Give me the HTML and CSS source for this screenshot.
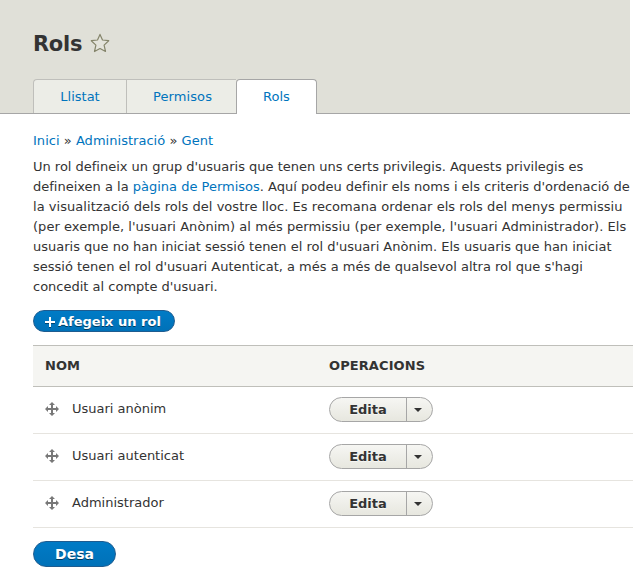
FILE: index.html
```html
<!DOCTYPE html>
<html lang="ca">
<head>
<meta charset="utf-8">
<title>Rols</title>
<link rel="stylesheet" href="styles.css">
</head>
<body>
<svg class="sprite" aria-hidden="true">
  <symbol id="move" viewBox="0 0 14 14"><path fill="#787878" d="M7 0l3 3H8v3h3V4l3 3-3 3V8H8v3h2l-3 3-3-3h2V8H3v2L0 7l3-3v2h3V3H4z"/></symbol>
</svg>
<header class="header">
  <div class="title-row">
    <h1 class="title">Rols</h1>
    <svg class="star" viewBox="0 0 20 20"><path d="M10 1.400l2.500 5.600 6.200.700-4.600 4.400 1.400 6.400L10 15.500l-5.500 3 1.400-6.400L1.300 7.700l6.200-.700z"/></svg>
  </div>
  <nav class="tabs">
    <a class="tab tab-first" href="#">Llistat</a>
    <a class="tab tab-second" href="#">Permisos</a>
    <a class="tab tab-active" href="#">Rols</a>
  </nav>
</header>
<main class="content">
  <nav class="breadcrumb"><a href="#">Inici</a> » <a href="#">Administració</a> » <a href="#">Gent</a></nav>
  <p class="help"><span class="tight">Un rol defineix un grup d'usuaris que tenen uns certs privilegis. Aquests privilegis es</span><br>
  defineixen a la <a href="#">pàgina de Permisos</a>. Aquí podeu definir els noms i els criteris d'ordenació de<br>
  <span class="loose">la visualització dels rols del vostre lloc. Es recomana ordenar els rols del menys permissiu</span><br>
  <span class="loose">(per exemple, l'usuari Anònim) al més permissiu (per exemple, l'usuari Administrador). Els</span><br>
  usuaris que no han iniciat sessió tenen el rol d'usuari Anònim. Els usuaris que han iniciat<br>
  sessió tenen el rol d'usuari Autenticat, a més a més de qualsevol altra rol que s'hagi<br>
  concedit al compte d'usuari.</p>
  <a class="primary add" href="#"><svg class="plus" viewBox="0 0 10 10"><path d="M4 0h2v4h4v2H6v4H4V6H0V4h4z"/></svg>Afegeix un rol</a>
  <div class="table">
    <div class="row head"><span>NOM</span><span class="operations">OPERACIONS</span></div>
    <div class="row">
      <div class="name"><svg class="move"><use href="#move"/></svg>Usuari anònim</div>
      <div class="drop"><a class="edit" href="#">Edita</a><button class="toggle" aria-label="Més"><i class="caret"></i></button></div>
    </div>
    <div class="row">
      <div class="name"><svg class="move"><use href="#move"/></svg>Usuari autenticat</div>
      <div class="drop"><a class="edit" href="#">Edita</a><button class="toggle" aria-label="Més"><i class="caret"></i></button></div>
    </div>
    <div class="row">
      <div class="name"><svg class="move"><use href="#move"/></svg>Administrador</div>
      <div class="drop"><a class="edit" href="#">Edita</a><button class="toggle" aria-label="Més"><i class="caret"></i></button></div>
    </div>
  </div>
  <button class="primary save">Desa</button>
</main>
</body>
</html>
```
FILE: styles.css
```css
* { box-sizing: border-box; }
body {
  margin: 0;
  height: 567px;
  overflow: hidden;
  background: #fff;
  color: #333;
  font: 13px/20px "DejaVu Sans", sans-serif;
}
a { color: #0074bd; text-decoration: none; }
.sprite { display: none; }
.header {
  display: flex;
  flex-direction: column;
  justify-content: space-between;
  width: 630px;
  height: 114px;
  padding: 30px 0 0 33px;
  background: #e0e0d8;
  box-shadow: inset 0 -1px #a6a6a6;
}
.title-row { display: flex; align-items: center; height: 28px; }
.title { margin: 0; font-size: 21px; line-height: 28px; letter-spacing: -0.3px; }
.star { width: 20px; height: 20px; margin: -2px 0 0 8px; fill: #e4e4dc; stroke: #85856b; stroke-width: 1.2; stroke-linejoin: round; }
.tabs { display: flex; height: 35px; }
.tab {
  height: 34px;
  border: 1px solid #bfbfbb;
  border-bottom: 0;
  background: #ecede7;
  line-height: 34px;
  text-align: center;
}
.tab-first { width: 93px; border-right: 0; border-top-left-radius: 4px; }
.tab-second { width: 110px; border-right: 0; padding-left: 2px; letter-spacing: 0.1px; }
.tab-active { width: 81px; height: 35px; border-color: #a6a6a6; border-radius: 4px 4px 0 0; background: #fff; }
.content { padding: 17px 0 0 33px; }
.breadcrumb { letter-spacing: 0.03px; }
.help { margin: 6px 0 13px; white-space: nowrap; }
.tight { letter-spacing: -0.012px; }
.loose { letter-spacing: 0.045px; }
.primary {
  display: flex;
  align-items: center;
  border: 1px solid #1e5c90;
  border-radius: 20px;
  background: linear-gradient(#007bc6, #0071b8);
  color: #fff;
  font-family: "DejaVu Sans", sans-serif;
  font-weight: 700;
  text-shadow: 0 1px rgba(0, 0, 0, 0.5);
}
.add { width: 142px; height: 22px; padding: 1px 0 0 11px; font-size: 13px; }
.plus { width: 10px; height: 10px; margin-right: 3px; fill: #fff; filter: drop-shadow(0 1px rgba(0, 0, 0, 0.4)); }
.save { justify-content: center; width: 83px; height: 26px; margin-top: 13px; padding: 0; font-size: 14px; }
.table { margin-top: 13px; }
.row {
  display: grid;
  grid-template-columns: 284px 1fr;
  align-items: center;
  height: 47px;
  padding-left: 12px;
  border-bottom: 1px solid #e6e4df;
}
.head { height: 42px; border-top: 1px solid #bfbfba; border-bottom-color: #bfbfba; background: #f5f5f2; font-weight: 700; }
.operations { letter-spacing: 0.1px; }
.name { display: flex; align-items: center; padding-bottom: 2px; }
.move { width: 14px; height: 14px; margin-right: 13px; }
.drop {
  display: flex;
  width: 104px;
  height: 25px;
  margin-bottom: 2px;
  border: 1px solid #a6a6a6;
  border-radius: 13px;
  background: linear-gradient(#f6f6f3, #e7e7df);
}
.edit { width: 76px; color: #333; font-weight: 700; line-height: 23px; text-align: center; text-shadow: 0 1px rgba(255, 255, 255, 0.6); }
.toggle { display: flex; flex: 1; align-items: center; justify-content: center; padding: 1px 3px 0 0; border: 0; border-left: 1px solid #a6a6a6; background: none; }
.caret { border: 4px solid transparent; border-top-color: #333; border-bottom: 0; }
```
